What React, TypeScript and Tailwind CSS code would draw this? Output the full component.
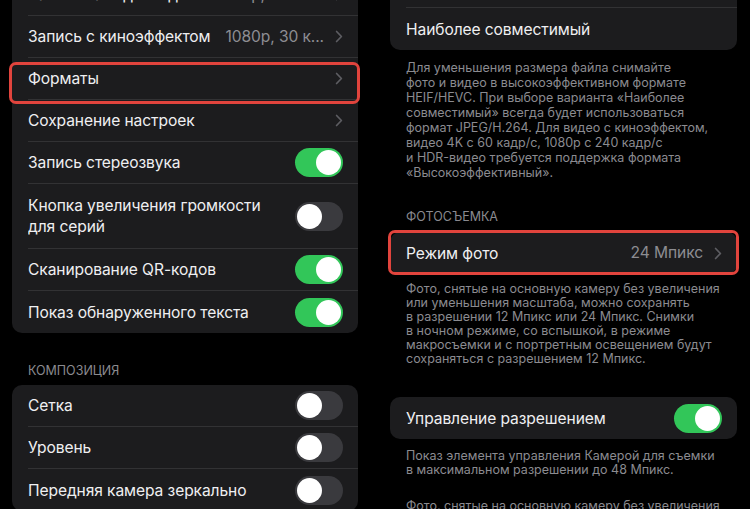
import React from "react";

type RowProps = {
  label: React.ReactNode;
  value?: string;
  chevron?: boolean;
  toggle?: boolean;
  on?: boolean;
  last?: boolean;
  tall?: boolean;
  mark?: "left" | "right";
};

function Toggle({ on }: { on: boolean }) {
  return (
    <div
      className={
        on
          ? "relative h-[29px] w-[48px] shrink-0 rounded-full bg-[#32c659]"
          : "relative h-[29px] w-[48px] shrink-0 rounded-full bg-[#3a3a3e]"
      }
    >
      <div
        className={
          on
            ? "absolute right-[2px] top-[2px] h-[25px] w-[25px] rounded-full bg-white"
            : "absolute left-[2px] top-[2px] h-[25px] w-[25px] rounded-full bg-white"
        }
      />
    </div>
  );
}

function Chevron() {
  return (
    <svg width="8" height="13" viewBox="0 0 8 13" className="shrink-0">
      <path
        d="M1.6 1.5 L6.4 6.5 L1.6 11.5"
        stroke="#5d5d62"
        strokeWidth="1.7"
        fill="none"
        strokeLinecap="round"
        strokeLinejoin="round"
      />
    </svg>
  );
}

function Row({ label, value, chevron, toggle, on, last, tall, mark }: RowProps) {
  return (
    <div className="relative pl-[16px]">
      <div
        className={[
          "flex items-center pr-[15px]",
          tall ? "py-[11px]" : "h-[42px]",
          last ? "" : "border-b border-[#323234]",
        ].join(" ")}
      >
        <div className="min-w-0 flex-1 overflow-hidden whitespace-nowrap text-[15.6px] leading-[21px] tracking-[-0.1px] text-[#efeff1]">
          {label}
        </div>
        {value && (
          <div className="ml-[13px] whitespace-nowrap text-[15.6px] tracking-[-0.1px] text-[#8d8d92]">
            {value}
          </div>
        )}
        {chevron && (
          <div className="ml-[11px] flex">
            <Chevron />
          </div>
        )}
        {toggle && <Toggle on={!!on} />}
      </div>
      {mark === "left" && (
        <div className="pointer-events-none absolute -bottom-[4px] -left-[3px] -right-[2px] top-[4px] rounded-[7px] border-[3px] border-[#e1443d]" />
      )}
      {mark === "right" && (
        <div className="pointer-events-none absolute -bottom-[1px] -left-[2px] -right-[2px] -top-[2px] rounded-[7px] border-[3px] border-[#e1443d]" />
      )}
    </div>
  );
}

function Card({ children, className = "" }: { children: React.ReactNode; className?: string }) {
  return <div className={"rounded-[10px] bg-[#1c1c1e] " + className}>{children}</div>;
}

function Header({ children, className = "" }: { children: React.ReactNode; className?: string }) {
  return (
    <div className={"pl-[16px] text-[12.5px] uppercase leading-[16px] text-[#8a8a8f] " + className}>
      {children}
    </div>
  );
}

function Footer({ lines, className = "" }: { lines: string[]; className?: string }) {
  return (
    <div className={"pl-[16px] text-[12.5px] text-[#8b8b90] " + className}>
      {lines.map((l, i) =>
        l === "" ? (
          <div key={i} className="h-[22px]" />
        ) : (
          <div key={i} className="whitespace-nowrap">
            {l}
          </div>
        )
      )}
    </div>
  );
}

export default function App() {
  return (
    <div className="flex h-[509px] w-[750px] overflow-hidden bg-black font-[Inter,'Noto_Sans',sans-serif] antialiased">
      {/* Camera settings list */}
      <div className="w-[375px] shrink-0 pl-[12px] pr-[17px]">
        <Card className="-mt-[26px]">
          <Row label="Запись замедл. видео" value="1080p, 240 к..." chevron />
          <Row label="Запись с киноэффектом" value="1080p, 30 к..." chevron />
          <Row label="Форматы" chevron mark="left" />
          <Row label="Сохранение настроек" chevron />
          <Row label="Запись стереозвука" toggle on />
          <Row
            tall
            label={
              <>
                Кнопка увеличения громкости
                <br />
                для серий
              </>
            }
            toggle
          />
          <Row label="Сканирование QR-кодов" toggle on />
          <Row label="Показ обнаруженного текста" toggle on last />
        </Card>

        <Header className="mt-[30px]">Композиция</Header>
        <Card className="mt-[6px]">
          <Row label="Сетка" toggle />
          <Row label="Уровень" toggle />
          <Row label="Передняя камера зеркально" toggle last />
        </Card>
      </div>

      {/* Formats screen */}
      <div className="w-[375px] shrink-0 pl-[15px] pr-[13px]">
        <Card className="-mt-[34px]">
          <Row label="" />
          <Row label="Наиболее совместимый" last />
        </Card>
        <Footer
          className="pt-[10px] leading-[15px]"
          lines={[
            "Для уменьшения размера файла снимайте",
            "фото и видео в высокоэффективном формате",
            "HEIF/HEVC. При выборе варианта «Наиболее",
            "совместимый» всегда будет использоваться",
            "формат JPEG/H.264. Для видео с киноэффектом,",
            "видео 4K с 60 кадр/с, 1080p с 240 кадр/с",
            "и HDR-видео требуется поддержка формата",
            "«Высокоэффективный».",
          ]}
        />

        <Header className="mt-[29px]">Фотосъемка</Header>
        <Card className="mt-[7px]">
          <Row label="Режим фото" value="24 Мпикс" chevron last mark="right" />
        </Card>
        <Footer
          className="pt-[8px] leading-[14px]"
          lines={[
            "Фото, снятые на основную камеру без увеличения",
            "или уменьшения масштаба, можно сохранять",
            "в разрешении 12 Мпикс или 24 Мпикс. Снимки",
            "в ночном режиме, со вспышкой, в режиме",
            "макросъемки и с портретным освещением будут",
            "сохраняться с разрешением 12 Мпикс.",
          ]}
        />

        <Card className="mt-[31px]">
          <Row label="Управление разрешением" toggle on last />
        </Card>
        <Footer
          className="pt-[10px] leading-[14px]"
          lines={[
            "Показ элемента управления Камерой для съемки",
            "в максимальном разрешении до 48 Мпикс.",
            "",
            "Фото, снятые на основную камеру без увеличения",
          ]}
        />
      </div>
    </div>
  );
}
